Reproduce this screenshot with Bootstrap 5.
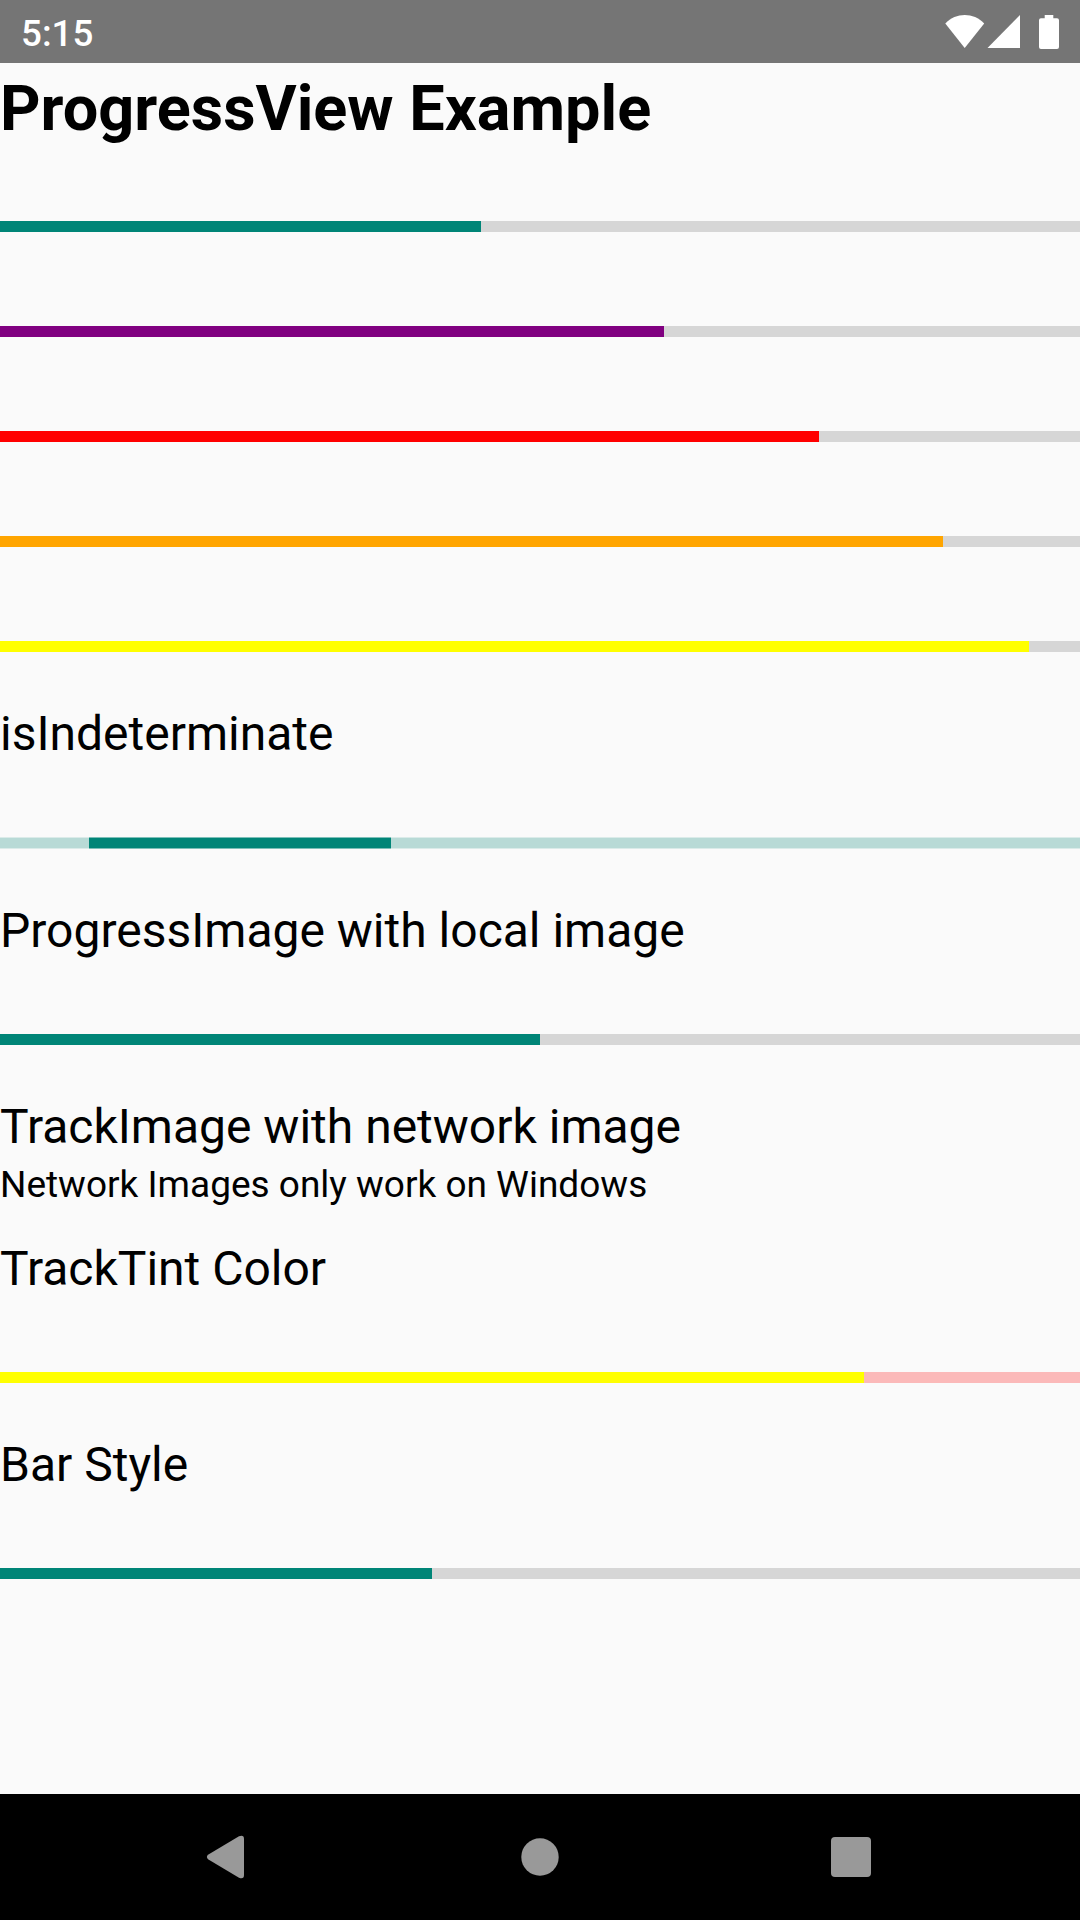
<!DOCTYPE html>
<html lang="en">
<head>
<meta charset="utf-8">
<meta name="viewport" content="width=device-width, initial-scale=1">
<title>ProgressView Example</title>
<link href="https://cdn.jsdelivr.net/npm/bootstrap@5.3.0/dist/css/bootstrap.min.css" rel="stylesheet">
<style>
body{font-family:Roboto,sans-serif;background:#fafafa;color:#000;height:1920px;overflow:hidden}
.statusbar{height:63px;background:#757575;color:#fff;padding-left:21px;padding-right:21px}
.clock{font-size:36.75px;font-weight:500;line-height:43px;padding-top:3px}
.title-xl{font-size:63px;font-weight:700;line-height:84px;padding-top:4px;height:111px}
.label-lg{font-size:48px;line-height:70px}
.section-label{padding-bottom:21px}
.note{font-size:37px;line-height:43px;padding-top:1px;padding-bottom:28px}
.slot{height:105px}
.slot-indeterminate{height:106px}
.progress{--bs-progress-height:11px;--bs-progress-bg:#d6d6d6;--bs-progress-border-radius:0;--bs-progress-bar-transition:none;width:100%}
.progress-bar{background:#008577}
.bar-purple{background:#800080}.bar-red{background:#f00}.bar-orange{background:#ffa500}.bar-yellow{background:#ff0}
.track-pink{--bs-progress-bg:#fbb9b9}
.track-teal{--bs-progress-height:12px;--bs-progress-bg:linear-gradient(#dbebe9 1px,#b8dad6 1px 11px,#dbebe9 11px);background:var(--bs-progress-bg)}
.track-teal .progress-bar{background:linear-gradient(#7dbfb8 1px,#008577 1px 11px,#7dbfb8 11px)}
.softkeys{height:126px;background:#000}
</style>
</head>
<body class="d-flex flex-column">
<header class="statusbar d-flex align-items-center justify-content-between">
  <div class="clock">5:15</div>
  <svg width="114" height="34" viewBox="945 14 114 34" fill="#fff" aria-hidden="true">
    <path d="M945.3 22.5C956 11.200 973.500 11.200 984.200 22.500L964.700 47Z"/>
    <path d="M987.500 47L1020 14V47Z"/>
    <path d="M1044.700 14h8.600v3.300h3.700a2 2 0 0 1 2 2V46a2 2 0 0 1-2 2h-16a2 2 0 0 1-2-2V19.300a2 2 0 0 1 2-2h3.700z"/>
  </svg>
</header>
<main class="flex-grow-1">
  <h1 class="title-xl m-0">ProgressView Example</h1>
  <div class="slot d-flex align-items-center"><div class="progress"><div class="progress-bar" style="width:481px"></div></div></div>
  <div class="slot d-flex align-items-center"><div class="progress"><div class="progress-bar bar-purple" style="width:664px"></div></div></div>
  <div class="slot d-flex align-items-center"><div class="progress"><div class="progress-bar bar-red" style="width:819px"></div></div></div>
  <div class="slot d-flex align-items-center"><div class="progress"><div class="progress-bar bar-orange" style="width:943px"></div></div></div>
  <div class="slot d-flex align-items-center"><div class="progress"><div class="progress-bar bar-yellow" style="width:1029px"></div></div></div>
  <div class="label-lg section-label">isIndeterminate</div>
  <div class="slot-indeterminate d-flex align-items-center"><div class="progress track-teal"><div class="progress-bar" style="width:301.5px;margin-left:89px"></div></div></div>
  <div class="label-lg section-label">ProgressImage with local image</div>
  <div class="slot d-flex align-items-center"><div class="progress"><div class="progress-bar" style="width:50%"></div></div></div>
  <div class="label-lg">TrackImage with network image</div>
  <div class="note">Network Images only work on Windows</div>
  <div class="label-lg section-label">TrackTint Color</div>
  <div class="slot d-flex align-items-center"><div class="progress track-pink"><div class="progress-bar bar-yellow" style="width:80%"></div></div></div>
  <div class="label-lg section-label">Bar Style</div>
  <div class="slot d-flex align-items-center"><div class="progress"><div class="progress-bar" style="width:40%"></div></div></div>
</main>
<nav class="softkeys">
  <svg class="d-block" width="1080" height="126" viewBox="0 1794 1080 126" fill="#999" aria-hidden="true">
    <path d="M208 1854.800L239 1836.300Q244 1834.500 244 1839V1875Q244 1879.500 239 1877.700L208 1859.200Q205.800 1857 208 1854.800Z"/>
    <circle cx="540" cy="1857" r="18.700"/>
    <rect x="831" y="1837" width="40" height="40" rx="4"/>
  </svg>
</nav>
<script src="https://cdn.jsdelivr.net/npm/bootstrap@5.3.0/dist/js/bootstrap.bundle.min.js"></script>
</body>
</html>
